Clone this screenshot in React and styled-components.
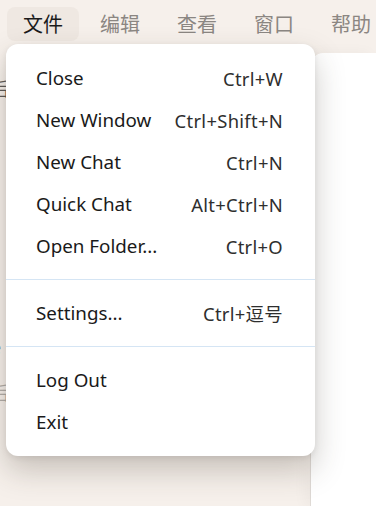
import React from "react";
import styled, { createGlobalStyle } from "styled-components";

const Global = createGlobalStyle`
  html, body { margin: 0; padding: 0; }
  body {
    width: 376px; height: 506px; overflow: hidden;
    background: #f6f0eb;
    font-family: "Noto Sans", "Noto Sans CJK SC", sans-serif;
  }
`;

const Page = styled.div`
  position: relative;
  width: 376px;
  height: 506px;
  display: flex;
  flex-direction: column;
  background: #f6f0eb;
`;

const MenuBar = styled.div`
  display: flex;
  align-items: center;
  gap: 5px;
  height: 53px;
  padding: 0 0 0 7px;
  box-sizing: border-box;
  flex-shrink: 0;
`;

const BarItem = styled.div`
  height: 34px;
  margin-top: -6px;
  padding: 0 16px;
  border-radius: 8px;
  display: flex;
  align-items: center;
  font-family: "Noto Sans CJK SC", sans-serif;
  font-size: 20px;
  white-space: nowrap;
  color: ${(p) => (p.$active ? "#1b1b1b" : "#8b8682")};
  background: ${(p) => (p.$active ? "#efe8e2" : "transparent")};
`;

const Body = styled.div`
  flex: 1;
  display: flex;
`;

const Sidebar = styled.div`
  width: 311px;
  flex-shrink: 0;
  display: flex;
  flex-direction: column;
  padding-top: 23px;
  box-sizing: border-box;
  overflow: hidden;
  border-right: 1px solid #e4dfda;
`;

const SideText = styled.div`
  font-family: "Noto Sans CJK SC", sans-serif;
  font-size: 18px;
  line-height: 24px;
  margin-left: -9px;
  color: ${(p) => (p.$muted ? "#b3aea9" : "#5e5a57")};
  margin-top: ${(p) => p.$top}px;
`;

const Panel = styled.div`
  flex: 1;
  background: #ffffff;
  border-top-left-radius: 12px;
  box-shadow: -6px 0 14px rgba(0, 0, 0, 0.04);
`;

const Dropdown = styled.div`
  position: absolute;
  top: 44px;
  left: 6px;
  width: 309px;
  background: #ffffff;
  border-radius: 12px;
  padding: 13px 0;
  box-sizing: border-box;
  box-shadow: 0 14px 30px rgba(60, 50, 40, 0.25), 0 2px 6px rgba(0, 0, 0, 0.08);
  display: flex;
  flex-direction: column;
`;

const Item = styled.div`
  height: 42px;
  display: flex;
  align-items: center;
  justify-content: space-between;
  padding: 0 32px 0 30px;
  font-size: 18.8px;
  color: #1a1a1a;
  white-space: nowrap;
`;

const Shortcut = styled.span`
  color: #2e2e2e;
  font-size: 18.4px;
  letter-spacing: 0.3px;
  font-family: "Noto Sans", "Noto Sans CJK SC", sans-serif;
`;

const Divider = styled.div`
  height: 1px;
  background: #d5e5f4;
  margin: 12px 0;
`;

const groups = [
  [
    ["Close", "Ctrl+W"],
    ["New Window", "Ctrl+Shift+N"],
    ["New Chat", "Ctrl+N"],
    ["Quick Chat", "Alt+Ctrl+N"],
    ["Open Folder...", "Ctrl+O"],
  ],
  [["Settings...", "Ctrl+逗号"]],
  [["Log Out", ""], ["Exit", ""]],
];

export default function App() {
  return (
    <Page>
      <Global />
      <MenuBar>
        <BarItem $active>文件</BarItem>
        <BarItem>编辑</BarItem>
        <BarItem>查看</BarItem>
        <BarItem>窗口</BarItem>
        <BarItem>帮助</BarItem>
      </MenuBar>
      <Body>
        <Sidebar>
          <SideText $top={0}>后</SideText>
          <SideText $top={234}>e</SideText>
          <SideText $top={22} $muted>后</SideText>
        </Sidebar>
        <Panel />
      </Body>
      <Dropdown>
        {groups.map((g, gi) => (
          <React.Fragment key={gi}>
            {gi > 0 && <Divider />}
            {g.map(([label, sc]) => (
              <Item key={label}>
                <span>{label}</span>
                <Shortcut>{sc}</Shortcut>
              </Item>
            ))}
          </React.Fragment>
        ))}
      </Dropdown>
    </Page>
  );
}
